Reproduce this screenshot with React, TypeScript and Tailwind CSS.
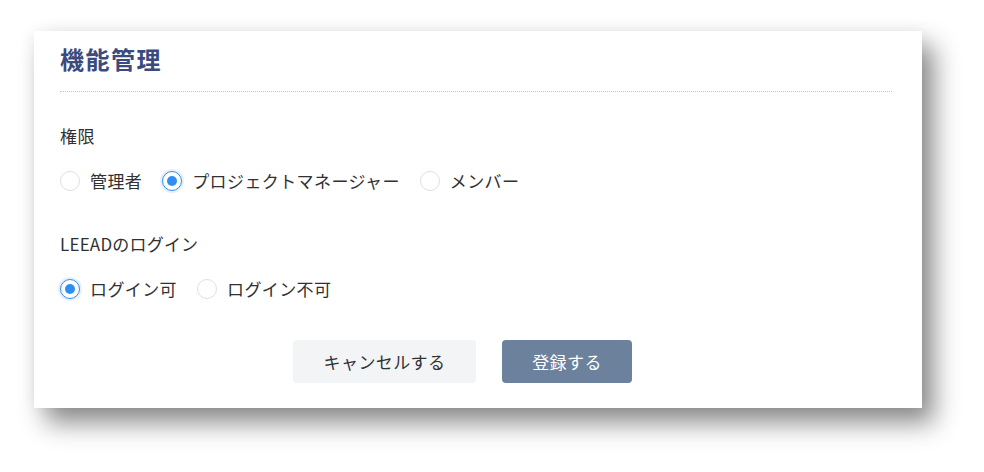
import { useState } from 'react';

type Option = { value: string; label: string };

const roles: Option[] = [
  { value: 'admin', label: '管理者' },
  { value: 'pm', label: 'プロジェクトマネージャー' },
  { value: 'member', label: 'メンバー' },
];

const logins: Option[] = [
  { value: 'allow', label: 'ログイン可' },
  { value: 'deny', label: 'ログイン不可' },
];

function RadioGroup({
  name,
  options,
  value,
  onChange,
}: {
  name: string;
  options: Option[];
  value: string;
  onChange: (v: string) => void;
}) {
  return (
    <div className="flex items-center h-6">
      {options.map((opt) => {
        const checked = opt.value === value;
        return (
          <label key={opt.value} className="flex items-center mr-[20px] cursor-pointer">
            <input
              type="radio"
              name={name}
              className="sr-only"
              checked={checked}
              onChange={() => onChange(opt.value)}
            />
            {checked ? (
              <span className="w-5 h-5 rounded-full border border-[#2f8ff0] bg-white flex items-center justify-center shadow-[0_0_0_2px_rgba(47,143,240,0.12)]">
                <span className="w-[10px] h-[10px] rounded-full bg-[#2f8ff0]" />
              </span>
            ) : (
              <span className="w-5 h-5 rounded-full border border-[#dddfe3] bg-white" />
            )}
            <span className="ml-[10px] text-[17px] leading-6 tracking-[0.4px] text-[#303133]">{opt.label}</span>
          </label>
        );
      })}
    </div>
  );
}

export default function App() {
  const [role, setRole] = useState('pm');
  const [login, setLogin] = useState('allow');

  return (
    <div
      className="w-[984px] h-[472px] bg-white pt-[31px] pl-[34px]"
      style={{ fontFamily: '"Noto Sans CJK JP", "Noto Sans", sans-serif' }}
    >
      <div className="w-[888px] h-[377px] bg-white pl-[26px] pr-[30px] pt-[12px] shadow-[12px_15px_24px_rgba(0,0,0,0.45),0_0_16px_rgba(0,0,0,0.06)]">
        <h1 className="text-[24px] leading-8 font-bold text-[#3b4b7e] tracking-[1.5px]">機能管理</h1>
        <div className="mt-4 border-b border-dotted border-[#c4c4c4]" />

        <div className="mt-8 text-[17px] leading-6 tracking-[0.4px] text-[#303133]">権限</div>
        <div className="mt-[21px]">
          <RadioGroup name="role" options={roles} value={role} onChange={setRole} />
        </div>

        <div className="mt-[39px] text-[17px] leading-6 tracking-[0.2px] text-[#303133]">LEEADのログイン</div>
        <div className="mt-[21px]">
          <RadioGroup name="login" options={logins} value={login} onChange={setLogin} />
        </div>

        <div className="mt-[39px] flex justify-center gap-[26px] pr-[27px]">
          <button className="w-[183px] h-[43px] rounded-[4px] bg-[#f2f4f6] text-[17px] tracking-[0.4px] text-[#303133]">
            キャンセルする
          </button>
          <button className="w-[130px] h-[43px] rounded-[4px] bg-[#6b819c] text-[17px] tracking-[0.4px] text-white">
            登録する
          </button>
        </div>
      </div>
    </div>
  );
}
